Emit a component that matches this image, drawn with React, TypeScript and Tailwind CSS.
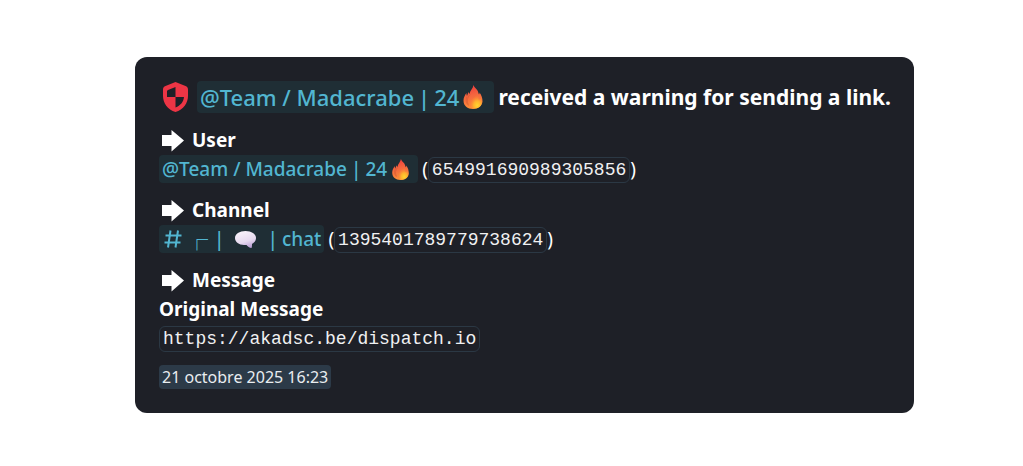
import type { ReactNode } from "react";

function Flame({ className }: { className: string }) {
  return (
    <svg viewBox="0 0 38 48" className={`shrink-0 ${className}`} aria-hidden="true">
      <defs>
        <linearGradient id="flame" x1="0.4" y1="0" x2="0.6" y2="1">
          <stop offset="0" stopColor="#ee3a3c" />
          <stop offset="0.4" stopColor="#f4643f" />
          <stop offset="1" stopColor="#ff9438" />
        </linearGradient>
        <radialGradient id="core" cx="0.62" cy="0.8" r="0.65">
          <stop offset="0" stopColor="#ffd52e" />
          <stop offset="0.45" stopColor="#ffb02e" />
          <stop offset="1" stopColor="#f8703c" stopOpacity="0.2" />
        </radialGradient>
      </defs>
      <path
        d="M20 0c1 4 5 7 8 11 2 4 2 6 3 8 1-1 1-2 1-4 4 5 6 11 6 18-1 9-8 15-19 15C8 48 0 42 0 31c0-6 3-11 6-15 0 2 0 4 1 6 1-3 2-6 4-8 0 2 0 3 1 4 1-7 7-11 8-18z"
        fill="url(#flame)"
      />
      <path
        d="M27 16c0 6-7 9-11 14-4 4-5 8-3 12 2 4 5 5 9 5 9 0 15-6 15-14 0-3-1-5-2-7-1 2-3 3-5 3 1-5 0-9-3-13z"
        fill="url(#core)"
      />
      <path
        d="M7 23c-3 7-2 13 3 18M13 19c-6 7-7 14-3 20"
        fill="none"
        stroke="#c9502f"
        strokeWidth="1.5"
        opacity="0.6"
      />
    </svg>
  );
}

function Bubble() {
  return (
    <svg viewBox="0 0 42 34" className="mr-3 ml-[10px] h-[17px] w-[21px] shrink-0" aria-hidden="true">
      <defs>
        <linearGradient id="bubble" x1="0.3" y1="0" x2="0.7" y2="1">
          <stop offset="0" stopColor="#f8f2fa" />
          <stop offset="0.6" stopColor="#e6d9ef" />
          <stop offset="1" stopColor="#b89bd3" />
        </linearGradient>
      </defs>
      <path
        d="M21 0c12 0 21 6 21 14 0 5-3 9-8 12 0 3 0 6-1 8-4 0-8-3-10-6h-5C8 28 0 22 0 14S9 0 21 0z"
        fill="url(#bubble)"
      />
    </svg>
  );
}

function Shield() {
  return (
    <svg viewBox="0 0 50 60" className="h-[30px] w-[25px] shrink-0" aria-hidden="true">
      <path
        fill="#ed3545"
        fillRule="evenodd"
        d="M25 0l20 8c3 1 5 3 5 7v13c0 14-9 27-25 32C9 55 0 42 0 28V15c0-4 2-6 5-7zM25 10L10 16c-2 1-2 2-2 4v10h17zM25 30v21c10-4 16-11 17-21z"
      />
    </svg>
  );
}

function Arrow() {
  return (
    <svg viewBox="0 0 44 44" className="h-[22px] w-[22px] shrink-0" aria-hidden="true">
      <path fill="#fff" d="M0 10h19V0l25 21-25 22V32H0z" />
    </svg>
  );
}

function Mention({ children, large = false }: { children: ReactNode; large?: boolean }) {
  return (
    <a
      href="#"
      className={`flex items-center rounded bg-[#1f2e35] px-[3px] font-medium text-[#52b6d1] ${
        large ? "h-8 pb-px text-[22px]" : "h-7 self-start text-[19px]"
      }`}
    >
      {children}
    </a>
  );
}

function Code({ children }: { children: ReactNode }) {
  return (
    <code className="flex h-[26px] items-center rounded-md border border-[#2b3844] px-[3px] font-['Liberation_Mono',monospace] text-[18px] text-[#f0f0f2]">
      {children}
    </code>
  );
}

function Field({ name, children }: { name: string; children: ReactNode }) {
  return (
    <section className="mb-3">
      <h3 className="flex h-[29px] items-center gap-2 pl-[3px] text-[19px] font-bold">
        <Arrow />
        <span className="pb-px">{name}</span>
      </h3>
      {children}
    </section>
  );
}

export default function App() {
  return (
    <main className="bg-white pt-[57px] pr-[109px] pb-[53px] pl-[135px] font-['Noto_Sans',sans-serif]">
      <article className="rounded-xl bg-[#1e2027] p-6 leading-none text-white">
        <h2 className="mb-[13px] flex h-8 items-center whitespace-nowrap pl-1 text-[21px] font-bold">
          <Shield />
          <span className="mr-1 ml-[9px]">
            <Mention large>
              <span>@Team / Madacrabe</span>
              <span className="mx-1">|</span>
              <span>24</span>
              <Flame className="mr-2 ml-1 h-6 w-5" />
            </Mention>
          </span>
          <span>received a warning for sending a link.</span>
        </h2>

        <Field name="User">
          <div className="flex h-[29px] items-center text-[19px]">
            <Mention>
              <span>@Team / Madacrabe</span>
              <span className="mx-1">|</span>
              <span>24</span>
              <Flame className="mr-[6px] ml-[5px] h-[21px] w-[17px]" />
            </Mention>
            <span className="ml-1">(</span>
            <Code>654991690989305856</Code>
            <span>)</span>
          </div>
        </Field>

        <Field name="Channel">
          <div className="flex h-[29px] items-center text-[19px]">
            <Mention>
              <svg viewBox="0 0 36 36" className="mr-1 ml-[2px] h-[18px] w-[18px] shrink-0" aria-hidden="true">
                <path
                  d="M13 1L8 35M28 1l-5 34M3 11h32M1 25h32"
                  fill="none"
                  stroke="#52b6d1"
                  strokeWidth="4"
                />
              </svg>
              <span className="pb-1 font-['Noto_Sans_CJK_JP',sans-serif] text-[22px] font-bold">┌</span>
              <span className="ml-[6px]">|</span>
              <Bubble />
              <span>|</span>
              <span className="ml-1">chat</span>
            </Mention>
            <span className="ml-1">(</span>
            <Code>1395401789779738624</Code>
            <span>)</span>
          </div>
        </Field>

        <Field name="Message">
          <h4 className="flex h-[29px] items-center pb-px text-[19px] font-bold">Original Message</h4>
          <div className="flex h-[29px] items-center">
            <Code>https://akadsc.be/dispatch.io</Code>
          </div>
        </Field>

        <div className="flex">
          <time
            dateTime="2025-10-21T16:23"
            className="flex h-6 items-center rounded bg-[#2c3a48] px-[3px] text-[16px] text-[#e9edf0]"
          >
            21 octobre 2025 16:23
          </time>
        </div>
      </article>
    </main>
  );
}
